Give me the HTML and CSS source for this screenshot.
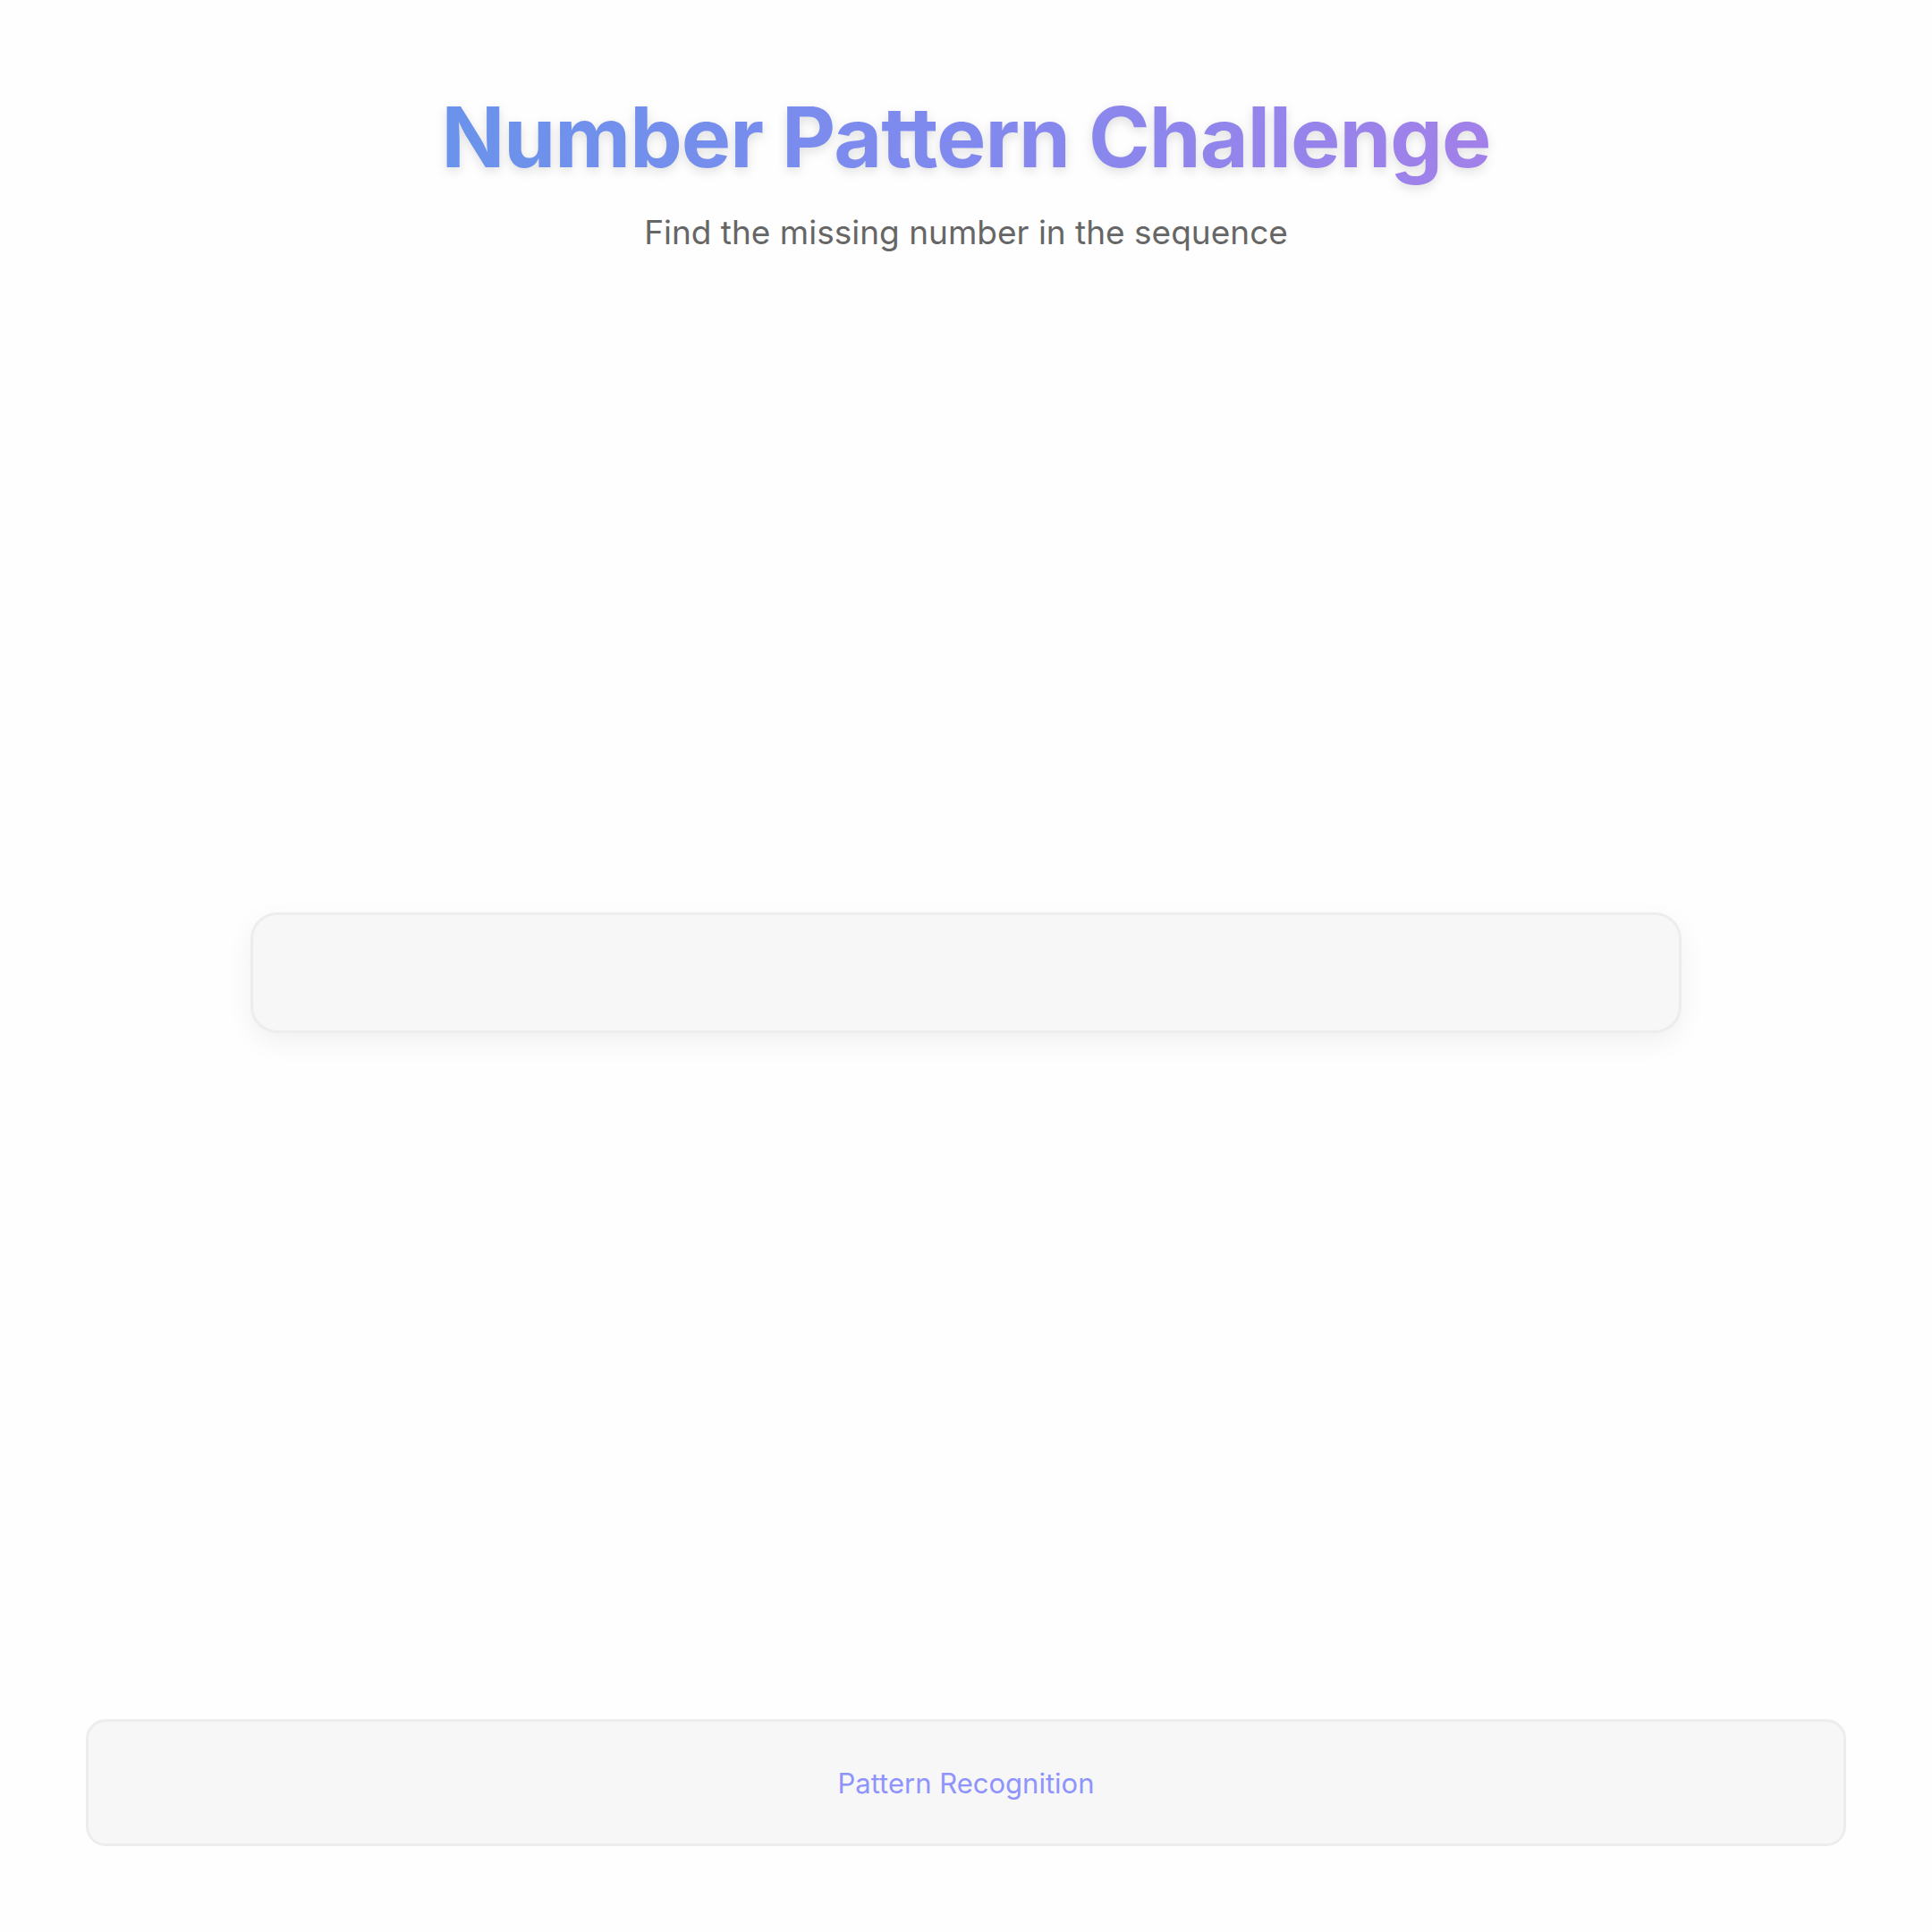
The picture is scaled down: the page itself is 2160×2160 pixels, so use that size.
FILE: index.html
```html
<!DOCTYPE html>
<html lang="en">
<head>
<meta charset="utf-8">
<title>Number Pattern Challenge</title>
<link rel="stylesheet" href="styles.css">
</head>
<body>
<div class="app">
  <header class="header">
    <h1 class="title">Number Pattern Challenge</h1>
    <p class="subtitle">Find the missing number in the sequence</p>
  </header>
  <main class="stage">
    <div class="sequence-card"></div>
  </main>
  <footer class="footer">
    <span class="footer-label">Pattern Recognition</span>
  </footer>
</div>
</body>
</html>
```

FILE: styles.css
```css
html, body {
  margin: 0;
  padding: 0;
  background: #fefefe;
}

body {
  font-family: Inter, "Noto Sans", "Liberation Sans", sans-serif;
  color: #333;
}

.app {
  min-height: 100vh;
  box-sizing: border-box;
  padding: 98px 96px 96px 96px;
  display: flex;
  flex-direction: column;
}

.header {
  display: flex;
  flex-direction: column;
  align-items: center;
  text-align: center;
}

.title {
  margin: 0;
  font-size: 93px;
  font-weight: 700;
  line-height: 1.2;
  letter-spacing: -1px;
  background: linear-gradient(90deg, #6a93eb 0%, #8189ee 50%, #a280e9 100%);
  -webkit-background-clip: text;
  background-clip: text;
  -webkit-text-fill-color: transparent;
  color: transparent;
  filter: drop-shadow(0 4px 6px rgba(0, 0, 0, 0.12));
}

.subtitle {
  margin: 26px 0 0;
  font-size: 37px;
  color: #666666;
  line-height: 1.3;
}

.stage {
  flex: 1;
  display: flex;
  align-items: center;
  justify-content: center;
  padding-bottom: 30px;
}

.sequence-card {
  width: 1600px;
  height: 135px;
  box-sizing: border-box;
  background: #f7f7f7;
  border: 3px solid #ededed;
  border-radius: 30px;
  box-shadow: 0 10px 30px rgba(0, 0, 0, 0.06);
}

.footer {
  height: 142px;
  box-sizing: border-box;
  background: #f7f7f7;
  border: 3px solid #ededed;
  border-radius: 22px;
  display: flex;
  align-items: center;
  justify-content: center;
}

.footer-label {
  font-size: 31px;
  color: #8e94fb;
}
```
